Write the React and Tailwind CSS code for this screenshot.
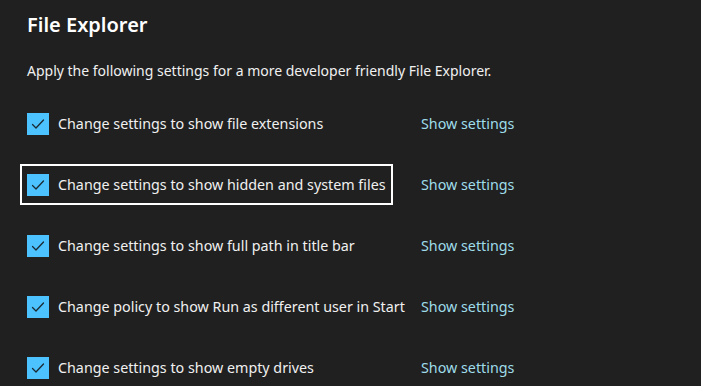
import React from "react";

const rows = [
  "Change settings to show file extensions",
  "Change settings to show hidden and system files",
  "Change settings to show full path in title bar",
  "Change policy to show Run as different user in Start",
  "Change settings to show empty drives",
];

function Check() {
  return (
    <div className="w-[22px] h-[22px] bg-[#4cc2ff] flex items-center justify-center shrink-0">
      <svg width="16" height="16" viewBox="0 0 16 16" fill="none">
        <path d="M2.5 8.5 L6 12 L13.5 4" stroke="#1a2a33" strokeWidth="1.3" strokeLinecap="round" strokeLinejoin="round" />
      </svg>
    </div>
  );
}

export default function App() {
  return (
    <div
      className="w-[701px] h-[386px] overflow-hidden bg-[#202020] text-white pl-[20px]"
      style={{ fontFamily: '"Noto Sans", "Open Sans", sans-serif' }}
    >
      <div className="ml-[7px] pt-[11px] text-[20px] leading-[28px] font-semibold">File Explorer</div>
      <div className="ml-[7px] mt-[22px] text-[14px] leading-[20px] text-[#f0f0f0]">
        Apply the following settings for a more developer friendly File Explorer.
      </div>
      <div className="mt-[22px] flex flex-col gap-[20px]">
        {rows.map((r, i) => (
          <div key={i} className="grid grid-cols-[401px_auto] items-center h-[41px]">
            <div
              className={
                "justify-self-start h-[41px] flex items-center gap-[9px] px-[5px] border-2 " +
                (i === 1 ? "border-white" : "border-transparent")
              }
            >
              <Check />
              <span className="text-[14.3px] leading-[20px] text-[#f0f0f0] whitespace-nowrap">{r}</span>
            </div>
            <span className="text-[14.3px] leading-[20px] text-[#9fdcea]">Show settings</span>
          </div>
        ))}
      </div>
    </div>
  );
}
